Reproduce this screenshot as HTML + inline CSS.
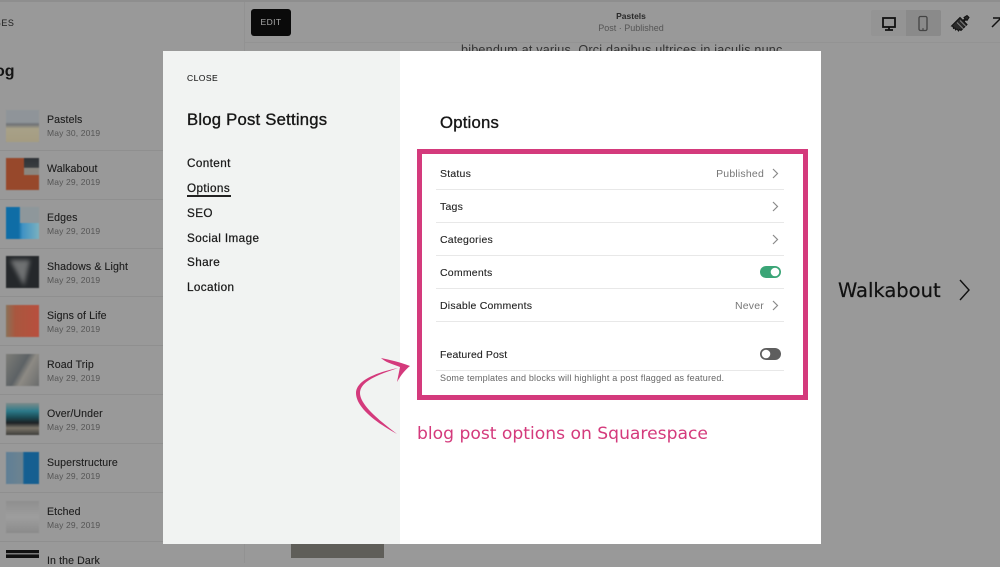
<!DOCTYPE html>
<html><head><meta charset="utf-8">
<style>
html,body{margin:0;padding:0}
body{width:1000px;height:563px;position:relative;overflow:hidden;background:#999;font-family:"Liberation Sans",sans-serif;color:#1a1a1a}
.a{position:absolute;white-space:nowrap}
.t{position:absolute;left:6px;width:33px;height:32px;filter:blur(.5px);overflow:hidden}
.n{position:absolute;left:47px;font-size:10.6px;color:#1c1c1c;white-space:nowrap;letter-spacing:.1px;-webkit-text-stroke:.1px #1c1c1c}
.d{position:absolute;left:47px;font-size:8.5px;color:#555;white-space:nowrap;letter-spacing:.15px}
.l{position:absolute;left:0;width:163px;height:1px;background:#8f8f8f}
.nav{position:absolute;left:187px;font-size:11.7px;color:#1a1a1a;white-space:nowrap;letter-spacing:.4px;-webkit-text-stroke:.25px #1a1a1a}
.r{position:absolute;left:440px;font-size:10.5px;color:#222;white-space:nowrap;letter-spacing:.22px;-webkit-text-stroke:.1px #222}
.v{position:absolute;font-size:10.5px;color:#777;white-space:nowrap;letter-spacing:.2px}
.s{position:absolute;left:436px;width:348px;height:1px;background:#e8e8e8}
</style></head><body>

<div class="a" style="left:0;top:0;width:1000px;height:2px;background:#8e8e8e"></div>
<div class="a" style="left:244px;top:2px;width:1px;height:561px;background:#929292"></div>
<div class="a" style="left:245px;top:42px;width:755px;height:1px;background:#939393"></div>

<!-- sidebar -->
<div class="a" style="left:0;top:18px;font-size:9px;letter-spacing:.5px;color:#1c1c1c;margin-left:-18.500px">PAGES</div>
<div class="a" style="left:-21px;top:63px;font-size:16px;font-weight:bold;color:#151515">Blog</div>

<div class="t" style="top:110px;background:linear-gradient(180deg,#8f9499 0,#8f9499 38%,#6f7276 45%,#a8a188 58%,#a59c81 100%)"></div>
<div class="n" style="top:114px">Pastels</div><div class="d" style="top:128px">May 30, 2019</div>
<div class="l" style="top:150px"></div>

<div class="t" style="top:158px;background:#97482b"><div style="position:absolute;left:18px;top:0;width:15px;height:17px;background:linear-gradient(180deg,#2f3337 0,#3a3d40 55%,#8b8780 60%,#8b8780 100%)"></div></div>
<div class="n" style="top:163px">Walkabout</div><div class="d" style="top:177px">May 29, 2019</div>
<div class="l" style="top:199px"></div>

<div class="t" style="top:207px;background:linear-gradient(90deg,#0f6da6 0,#0f6da6 38%,#3f93c4 50%,#7ab0bf 100%)"><div style="position:absolute;left:14px;top:0;width:19px;height:16px;background:#8e979b"></div></div>
<div class="n" style="top:212px">Edges</div><div class="d" style="top:226px">May 29, 2019</div>
<div class="l" style="top:248px"></div>

<div class="t" style="top:256px;background:#25282b"><div style="position:absolute;left:4px;top:4px;width:0;height:0;border-left:14px solid transparent;border-right:6px solid transparent;border-top:26px solid #6f7172;filter:blur(2px)"></div></div>
<div class="n" style="top:261px">Shadows &amp; Light</div><div class="d" style="top:275px">May 29, 2019</div>
<div class="l" style="top:296px"></div>

<div class="t" style="top:305px;background:linear-gradient(90deg,#8a7258 0,#a9573f 28%,#b84f3e 100%)"></div>
<div class="n" style="top:310px">Signs of Life</div><div class="d" style="top:324px">May 29, 2019</div>
<div class="l" style="top:345px"></div>

<div class="t" style="top:354px;background:linear-gradient(120deg,#7d7d78 0,#5d6265 45%,#8d8a84 60%,#6a6c6c 100%)"></div>
<div class="n" style="top:359px">Road Trip</div><div class="d" style="top:373px">May 29, 2019</div>
<div class="l" style="top:394px"></div>

<div class="t" style="top:403px;background:linear-gradient(180deg,#7d8b8a 0,#2c7a8a 25%,#1b4b55 45%,#1d2124 62%,#7c756a 78%,#3d3d3a 100%)"></div>
<div class="n" style="top:408px">Over/Under</div><div class="d" style="top:422px">May 29, 2019</div>
<div class="l" style="top:443px"></div>

<div class="t" style="top:452px;background:linear-gradient(90deg,#5f7f96 0,#6d8390 50%,#155f92 55%,#175f90 100%)"></div>
<div class="n" style="top:457px">Superstructure</div><div class="d" style="top:471px">May 29, 2019</div>
<div class="l" style="top:492px"></div>

<div class="t" style="top:501px;background:linear-gradient(180deg,#8f8f8f 0,#9e9e9e 50%,#8b8b8b 100%)"></div>
<div class="n" style="top:506px">Etched</div><div class="d" style="top:520px">May 29, 2019</div>
<div class="l" style="top:541px"></div>

<div class="a" style="left:6px;top:550px;width:33px;height:8px;background:linear-gradient(180deg,#111 0,#111 40%,#7a7a7a 40%,#7a7a7a 55%,#111 55%,#111 100%)"></div>
<div class="n" style="top:555px">In the Dark</div>

<!-- top bar -->
<div class="a" style="left:251px;top:9px;width:40px;height:27px;background:#0a0a0a;border-radius:3px;color:#aaa;font-size:8.5px;letter-spacing:.4px;line-height:27px;text-align:center">EDIT</div>
<div class="a" style="left:560px;width:142px;top:11px;text-align:center;font-size:8.5px;font-weight:bold;color:#2a2a2a">Pastels</div>
<div class="a" style="left:560px;width:142px;top:23px;text-align:center;font-size:9px;color:#555">Post · Published</div>

<div class="a" style="left:871px;top:10px;width:70px;height:26px;background:#949494;border-radius:2px"></div>
<div class="a" style="left:906px;top:10px;width:35px;height:26px;background:#8a8a8a;border-radius:0 2px 2px 0"></div>
<svg class="a" style="left:0;top:0" width="1000" height="50" viewBox="0 0 1000 50">
<g fill="none" stroke="#111" stroke-width="1.800">
<rect x="883" y="18" width="12" height="9"/>
<path d="M889 27v3M885 30h8" />
</g>
<rect x="919" y="16.500" width="8" height="14" rx="1.500" fill="none" stroke="#444" stroke-width="1.300"/>
<path d="M922 29h2" stroke="#444" stroke-width="1"/>
<g transform="translate(0 1.500)">
<path d="M954 22l6-6 3 3 2-2-1-1 3-2 2 2-2 3-1-1-2 2 3 3-6 6-1.500-1-1 1.500-1.500-2-1.500 1-.5-2-1.500.5-.5-2-1.500-.5z" fill="#2a2a2a" stroke="#111" stroke-width="1"/>
<path d="M957 21l7 7M960 19l6 6" stroke="#999" stroke-width=".8" fill="none"/>
</g>
<path d="M992 27l9-9M993 18h8v8" fill="none" stroke="#111" stroke-width="1.500"/>
</svg>

<!-- background text -->
<div class="a" style="left:461px;top:43px;font-size:12.600px;color:#333;letter-spacing:.2px">bibendum at varius. Orci dapibus ultrices in iaculis nunc</div>
<div class="a" style="left:838px;top:279px;font-size:19.500px;color:#111;font-family:'DejaVu Sans',sans-serif;-webkit-text-stroke:.2px #111">Walkabout</div>
<svg class="a" style="left:955px;top:278px" width="20" height="24"><path d="M5 2l9 10-9 10" fill="none" stroke="#111" stroke-width="1.400"/></svg>
<div class="a" style="left:291px;top:544px;width:93px;height:14px;background:#5f5e59"></div>

<!-- modal -->
<div class="a" style="left:163px;top:51px;width:658px;height:493px;background:#fff"></div>
<div class="a" style="left:163px;top:51px;width:237px;height:493px;background:#f1f3f2"></div>

<div class="a" style="left:187px;top:73px;font-size:8.500px;letter-spacing:.45px;color:#1e1e1e;-webkit-text-stroke:.1px #1e1e1e">CLOSE</div>
<div class="a" style="left:187px;top:110px;font-size:16.700px;color:#161616;letter-spacing:.22px;-webkit-text-stroke:.35px #161616">Blog Post Settings</div>
<div class="nav" style="top:157px">Content</div>
<div class="nav" style="top:182px">Options</div>
<div class="a" style="left:187px;top:195px;width:44px;height:1.500px;background:#222"></div>
<div class="nav" style="top:207px">SEO</div>
<div class="nav" style="top:232px">Social Image</div>
<div class="nav" style="top:256px">Share</div>
<div class="nav" style="top:281px">Location</div>

<div class="a" style="left:440px;top:113px;font-size:16.700px;color:#161616;letter-spacing:.22px;-webkit-text-stroke:.35px #161616">Options</div>

<!-- rows -->
<div class="r" style="top:168px">Status</div>
<div class="v" style="right:236px;top:168px">Published</div>
<div class="s" style="top:189px"></div>
<div class="r" style="top:201px">Tags</div>
<div class="s" style="top:222px"></div>
<div class="r" style="top:234px">Categories</div>
<div class="s" style="top:255px"></div>
<div class="r" style="top:267px">Comments</div>
<div class="s" style="top:288px"></div>
<div class="r" style="top:300px">Disable Comments</div>
<div class="v" style="right:236px;top:300px">Never</div>
<div class="s" style="top:321px"></div>
<div class="r" style="top:349px;letter-spacing:.1px">Featured Post</div>
<div class="s" style="top:370px"></div>
<div class="a" style="left:440px;top:373px;font-size:9px;color:#666;letter-spacing:.2px">Some templates and blocks will highlight a post flagged as featured.</div>

<svg class="a" style="left:0;top:0" width="1000" height="563" viewBox="0 0 1000 563">
<g fill="none" stroke="#8a8a8a" stroke-width="1.200">
<path d="M773 169l4.500 4.500-4.500 4.500M773 202l4.500 4.500-4.500 4.500M773 235l4.500 4.500-4.500 4.500M773 301l4.500 4.500-4.500 4.500"/>
</g>
<rect x="760" y="266" width="21" height="12" rx="6" fill="#3ba577"/>
<circle cx="775" cy="272" r="4.300" fill="#fff"/>
<rect x="760" y="348" width="21" height="12" rx="6" fill="#5e5e5e"/>
<circle cx="766" cy="354" r="4.300" fill="#fff"/>
<rect x="419.500" y="151.500" width="386" height="246" fill="none" stroke="#d43a7c" stroke-width="5"/>
<path d="M397 434C375 422 356 407 356 393C356 380 378 372 398 368C380 374 360 381 360 393C360 405 380 421 397 434Z" fill="#d43a7c"/>
<path d="M381 358C390 360 400 362 410 366C405 370 401 375 397 382C398 377 399 372 400 367C392 364 385 362 381 358Z" fill="#d43a7c"/>
</svg>
<div class="a" style="left:417px;top:424px;font-family:'DejaVu Sans',sans-serif;font-size:17.150px;color:#d43a7c">blog post options on Squarespace</div>

</body></html>
